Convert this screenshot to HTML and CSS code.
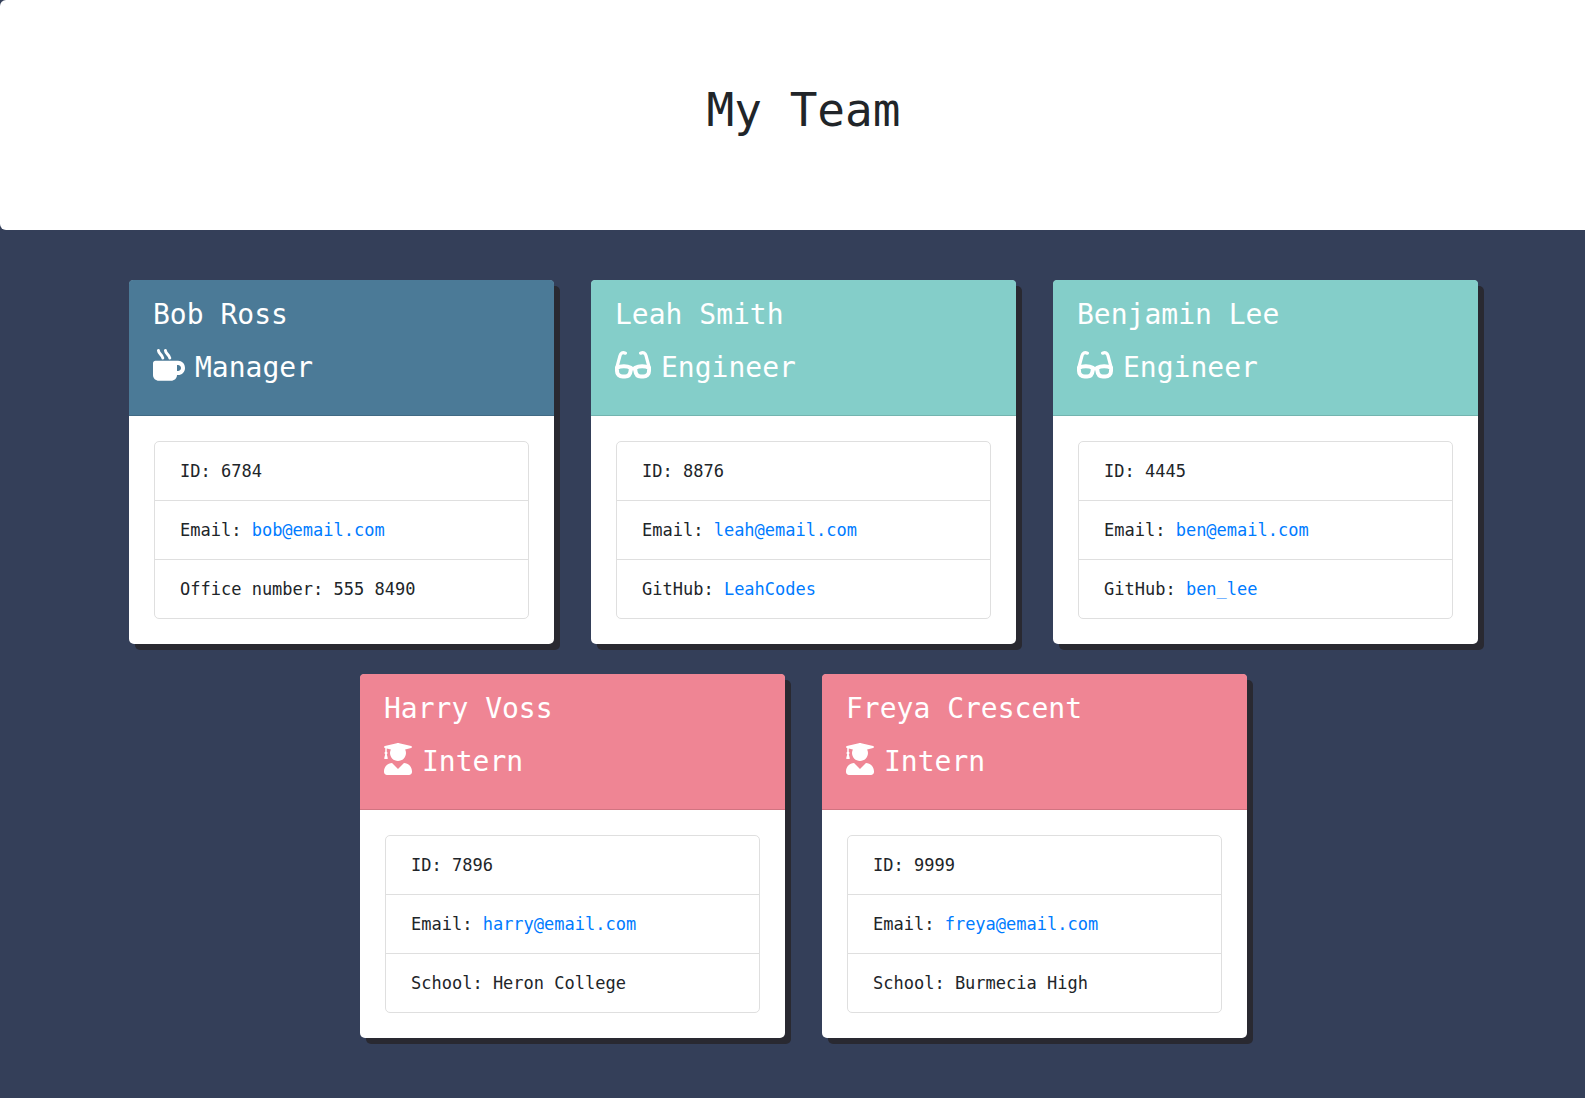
FILE: index.html
```html
<!DOCTYPE html>
<html lang="en">
<head>
  <meta charset="UTF-8">
  <meta name="viewport" content="width=device-width, initial-scale=1">
  <title>My Team</title>
  <link rel="stylesheet" href="styles.css">
</head>
<body>
  <svg class="sprite" aria-hidden="true">
    <symbol id="mug" viewBox="0 0 32 32">
      <path d="M2.4 11.8H25C29 11.8 32 14.9 32 18.9C32 22.9 29 26 25 26H24C24 29.3 21.3 31.8 18 31.8H6C2.7 31.8 0 29.3 0 26V14.2C0 12.9 1.1 11.8 2.4 11.8ZM24 16V22H25C26.7 22 28 20.6 28 19C28 17.4 26.7 16 25 16Z"/>
      <path fill="none" stroke="currentColor" stroke-width="2.9" stroke-linecap="round" d="M5.4 1.5C5.8 5.2 9.2 5.4 9.8 9M12.4 1.5C12.8 5.2 16.2 5.4 16.8 9"/>
    </symbol>
    <symbol id="glasses" viewBox="0 0 36 32">
      <g fill="none" stroke="currentColor" stroke-linecap="round" stroke-linejoin="round">
        <path stroke-width="3.2" d="M10.4 4.2C7.6 3 5.7 3.9 5 6.6L1.7 19M25.6 4.2C28.4 3 30.3 3.9 31 6.6L34.3 19"/>
        <path stroke-width="4" d="M2 18.8C5.5 16.8 12 16.6 15.6 18.8V22C15.2 25.6 13.2 27.4 10.2 27.4H7.6C4.4 27.4 2 25.4 2 22ZM34 18.8C30.5 16.8 24 16.6 20.4 18.8V22C20.8 25.6 22.8 27.4 25.8 27.4H28.4C31.6 27.4 34 25.4 34 22Z"/>
        <path stroke-width="3.8" d="M15.6 19.6H20.4"/>
      </g>
    </symbol>
    <symbol id="graduate" viewBox="0 0 448 512"><path d="M319.4 320.6L224 416l-95.4-95.4C57.1 323.7 0 382.2 0 454.4v9.6c0 26.5 21.5 48 48 48h352c26.5 0 48-21.5 48-48v-9.6c0-72.2-57.1-130.7-128.6-133.8zM13.6 79.8l6.4 1.5v58.4c-7 4.2-12 11.5-12 20.3 0 8.4 4.6 15.4 11.1 19.7L3.5 242c-1.7 6.9 2.1 14 7.6 14h41.8c5.5 0 9.3-7.1 7.6-14l-15.6-62.3C51.4 175.4 56 168.4 56 160c0-8.8-5-16.1-12-20.3V87.1l66 15.9c-8.6 17.2-14 36.4-14 57 0 70.7 57.3 128 128 128s128-57.3 128-128c0-20.6-5.3-39.8-14-57l96.3-23.2c18.2-4.4 18.2-27.1 0-31.5l-190.4-46c-13-3.1-26.7-3.1-39.7 0L13.6 48.2c-18.1 4.4-18.1 27.2 0 31.6z"/></symbol>
  </svg>

  <header class="banner">
    <h1 class="banner-title">My Team</h1>
  </header>

  <main class="team">
    <article class="card">
      <div class="card-header manager">
        <h2 class="name">Bob Ross</h2>
        <h3 class="role"><svg class="icon" width="32" height="32" aria-hidden="true"><use href="#mug"/></svg>Manager</h3>
      </div>
      <ul class="details">
        <li>ID: 6784</li>
        <li>Email: <a href="mailto:bob@email.com">bob@email.com</a></li>
        <li>Office number: 555 8490</li>
      </ul>
    </article>

    <article class="card">
      <div class="card-header engineer">
        <h2 class="name">Leah Smith</h2>
        <h3 class="role"><svg class="icon" width="36" height="32" aria-hidden="true"><use href="#glasses"/></svg>Engineer</h3>
      </div>
      <ul class="details">
        <li>ID: 8876</li>
        <li>Email: <a href="mailto:leah@email.com">leah@email.com</a></li>
        <li>GitHub: <a href="https://github.com/LeahCodes">LeahCodes</a></li>
      </ul>
    </article>

    <article class="card">
      <div class="card-header engineer">
        <h2 class="name">Benjamin Lee</h2>
        <h3 class="role"><svg class="icon" width="36" height="32" aria-hidden="true"><use href="#glasses"/></svg>Engineer</h3>
      </div>
      <ul class="details">
        <li>ID: 4445</li>
        <li>Email: <a href="mailto:ben@email.com">ben@email.com</a></li>
        <li>GitHub: <a href="https://github.com/ben_lee">ben_lee</a></li>
      </ul>
    </article>

    <article class="card">
      <div class="card-header intern">
        <h2 class="name">Harry Voss</h2>
        <h3 class="role"><svg class="icon" width="28" height="32" aria-hidden="true"><use href="#graduate"/></svg>Intern</h3>
      </div>
      <ul class="details">
        <li>ID: 7896</li>
        <li>Email: <a href="mailto:harry@email.com">harry@email.com</a></li>
        <li>School: Heron College</li>
      </ul>
    </article>

    <article class="card">
      <div class="card-header intern">
        <h2 class="name">Freya Crescent</h2>
        <h3 class="role"><svg class="icon" width="28" height="32" aria-hidden="true"><use href="#graduate"/></svg>Intern</h3>
      </div>
      <ul class="details">
        <li>ID: 9999</li>
        <li>Email: <a href="mailto:freya@email.com">freya@email.com</a></li>
        <li>School: Burmecia High</li>
      </ul>
    </article>
  </main>
</body>
</html>
```
FILE: styles.css
```css
* {
  box-sizing: border-box;
}

body {
  margin: 0;
  background: #343f59;
  color: #212529;
  font-family: Consolas, "DejaVu Sans Mono", monospace;
  font-size: 17px;
  line-height: 28px;
}

h1,
h2,
h3,
ul {
  margin: 0;
  padding: 0;
  font-weight: 400;
}

.sprite {
  display: none;
}

.banner {
  padding: 75px 0 85px 22px;
  background: #fff;
  border-radius: 6px 0 0 6px;
  text-align: center;
}

.banner-title {
  font-size: 46px;
  line-height: 70px;
}

.team {
  display: flex;
  flex-wrap: wrap;
  justify-content: center;
  gap: 30px 37px;
  padding: 50px 0 60px 22px;
}

.card {
  width: 425px;
  max-width: 100%;
  background: #fff;
  border-radius: 5px;
  box-shadow: 6px 6px 0 #292931;
}

.card-header {
  display: flex;
  flex-direction: column;
  gap: 16px;
  padding: 16px 24px 29px;
  border-bottom: 1px solid rgba(0, 0, 0, 0.125);
  border-radius: 4px 4px 0 0;
  color: #fff;
}

.manager {
  background-color: #4b7a97;
}

.engineer {
  background-color: #84cec9;
}

.intern {
  background-color: #ef8594;
}

.name,
.role {
  font-size: 28px;
  line-height: 37px;
}

.role {
  display: flex;
  align-items: flex-start;
  gap: 10px;
}

.icon {
  fill: currentColor;
}

.details {
  margin: 25px;
  border: 1px solid #dfdfdf;
  border-radius: 5px;
  list-style: none;
}

.details li {
  padding: 15px 25px;
}

.details li + li {
  border-top: 1px solid #dfdfdf;
}

.details a {
  color: #007bff;
  text-decoration: none;
}
```
